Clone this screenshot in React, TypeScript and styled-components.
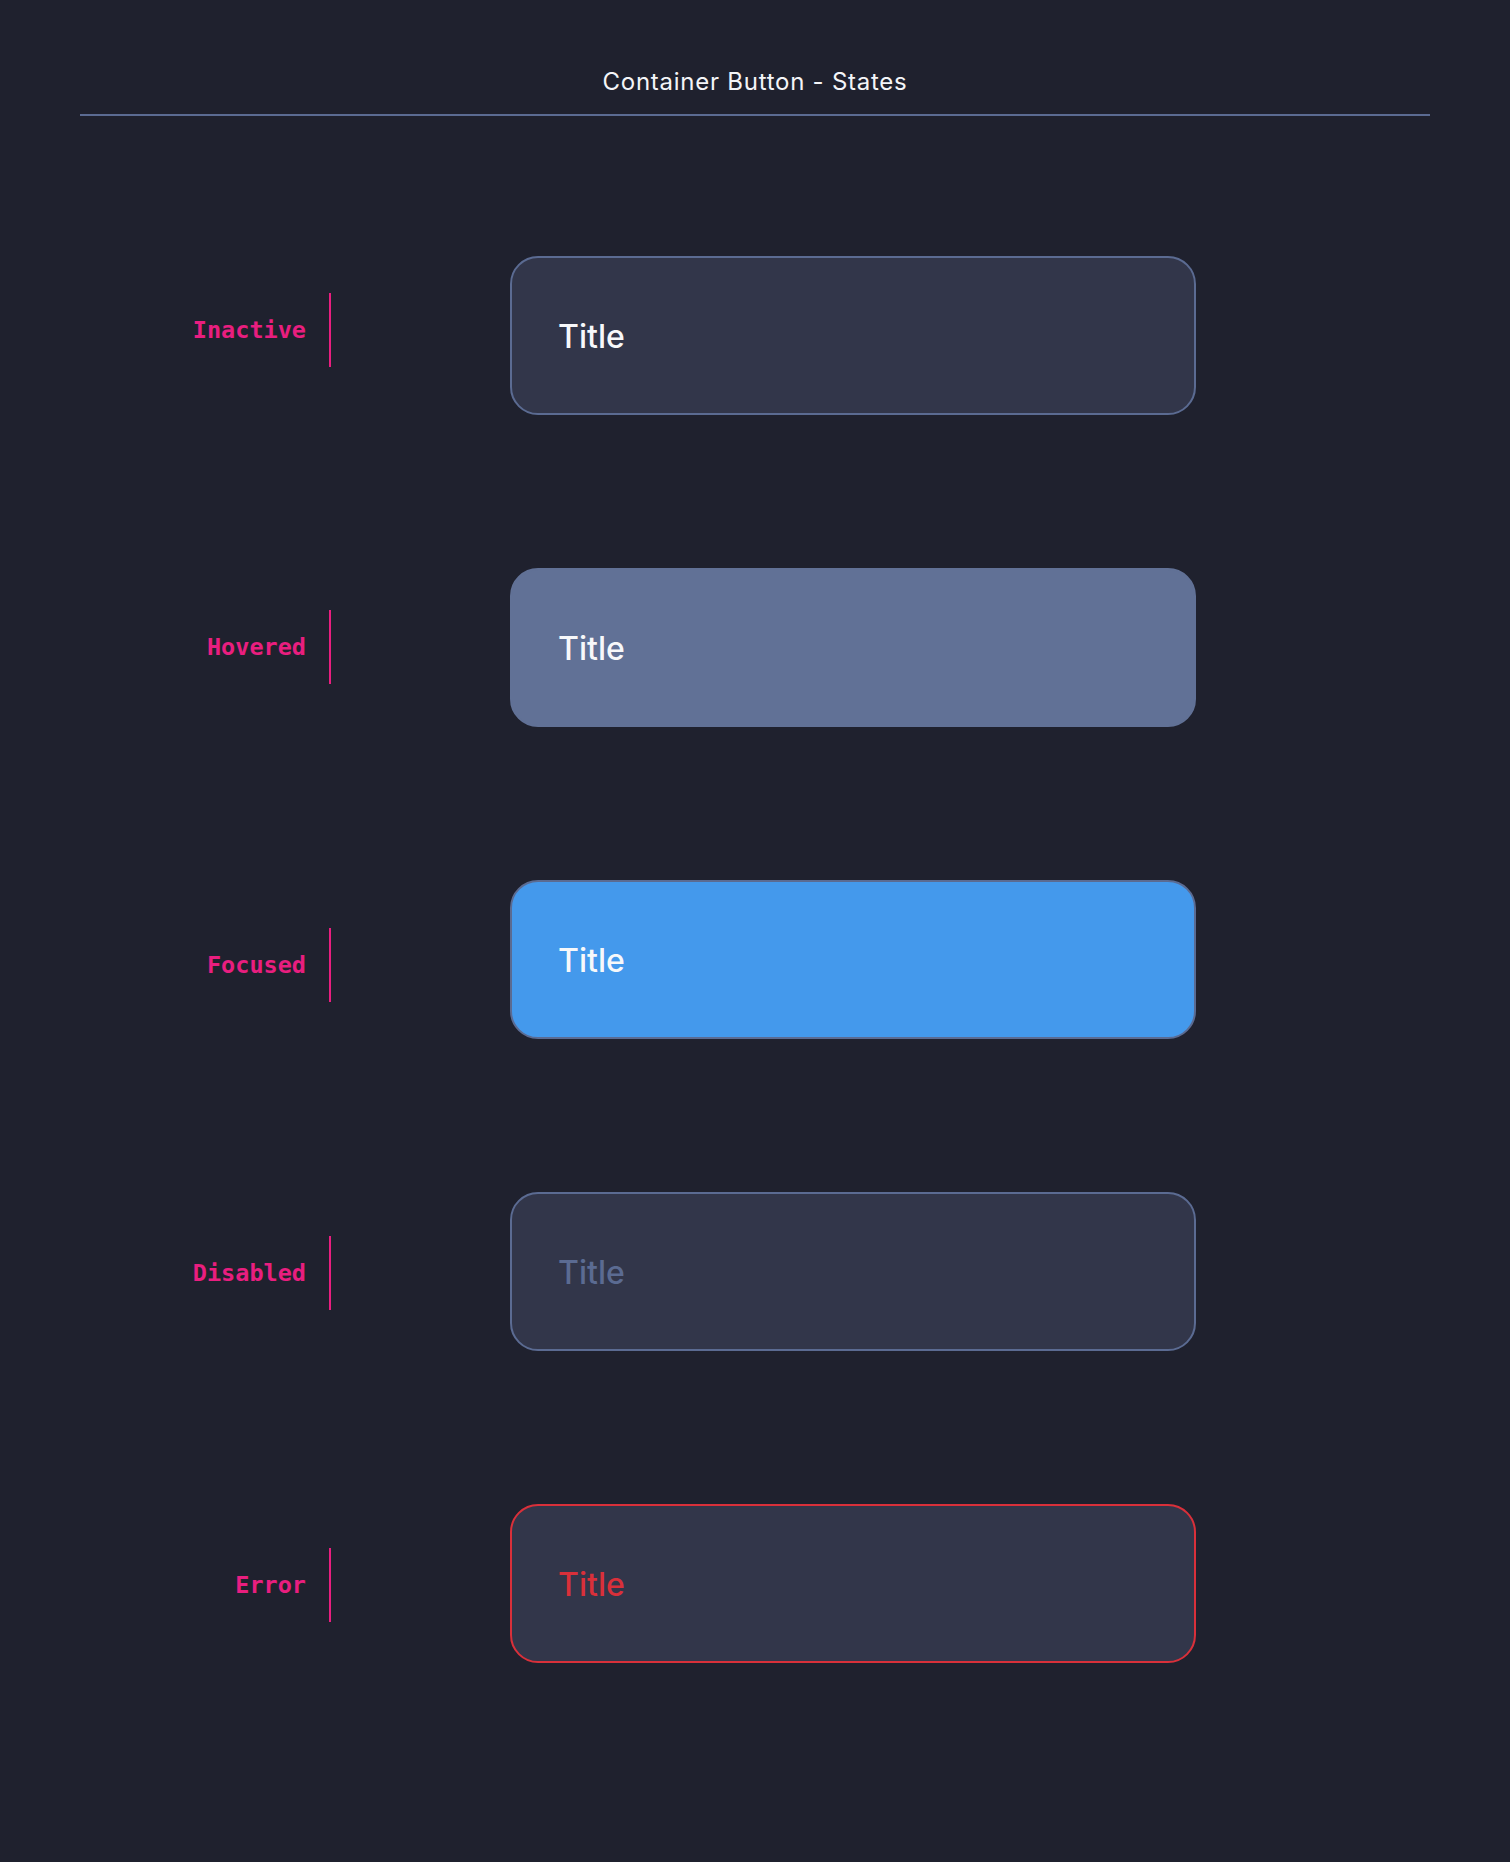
import styled, { createGlobalStyle, css } from "styled-components";

type State = "inactive" | "hovered" | "focused" | "disabled" | "error";

const rows: { state: State; label: string; shift: number }[] = [
	{ state: "inactive", label: "Inactive", shift: -6 },
	{ state: "hovered", label: "Hovered", shift: -1 },
	{ state: "focused", label: "Focused", shift: 5 },
	{ state: "disabled", label: "Disabled", shift: 1 },
	{ state: "error", label: "Error", shift: 1 },
];

const App = () => {
	return (
		<>
			<GlobalStyle />
			<Page>
				<Header>
					<Heading>Container Button - States</Heading>
				</Header>
				<List>
					{rows.map((row) => (
						<Row key={row.state}>
							<LabelGroup $shift={row.shift}>
								<Label>{row.label}</Label>
								<Marker />
							</LabelGroup>
							<ContainerButton $state={row.state}>
								<ButtonTitle $state={row.state}>Title</ButtonTitle>
							</ContainerButton>
						</Row>
					))}
				</List>
			</Page>
		</>
	);
};

const GlobalStyle = createGlobalStyle`
	html, body {
		margin: 0;
		padding: 0;
		background-color: #1f212e;
	}
	* {
		box-sizing: border-box;
	}
`;

const Page = styled.div`
	min-height: 1862px;
	padding: 0 80px;
	background-color: #1f212e;
`;

const Header = styled.header`
	padding-top: 66px;
	padding-bottom: 16px;
	border-bottom: 2px solid #5b6b92;
	display: flex;
	justify-content: center;
`;

const Heading = styled.h1`
	margin: 0;
	font-family: "Inter", "Open Sans", sans-serif;
	font-weight: 400;
	font-size: 24px;
	letter-spacing: 0.75px;
	line-height: 32px;
	color: #f4f5f8;
`;

const List = styled.div`
	display: flex;
	flex-direction: column;
	gap: 153px;
	padding-top: 140px;
`;

const Row = styled.div`
	display: flex;
	align-items: center;
`;

const LabelGroup = styled.div<{ $shift: number }>`
	display: flex;
	align-items: center;
	width: 251px;
	gap: 23px;
	transform: translateY(${(p) => p.$shift}px);
	margin-right: 179px;
`;

const Label = styled.span`
	flex: 1;
	text-align: right;
	font-family: "DejaVu Sans Mono", "Liberation Mono", monospace;
	font-weight: 700;
	font-size: 23.5px;
	line-height: 28px;
	color: #e91e7f;
`;

const Marker = styled.div`
	width: 2px;
	height: 74px;
	background-color: #e91e7f;
`;

const buttonStates = {
	inactive: css`
		background-color: #32364a;
		border: 2px solid #5b6b92;
	`,
	hovered: css`
		background-color: #617196;
		border: 2px solid #617196;
	`,
	focused: css`
		background-color: #4499ec;
		border: 2px solid #5b6b92;
	`,
	disabled: css`
		background-color: #32364a;
		border: 2px solid #5b6b92;
	`,
	error: css`
		background-color: #32364a;
		border: 2px solid #d9303a;
	`,
};

const ContainerButton = styled.div<{ $state: State }>`
	display: flex;
	align-items: center;
	width: 686px;
	height: 159px;
	padding-left: 46px;
	padding-top: 2px;
	border-radius: 28px;
	${(p) => buttonStates[p.$state]}
`;

const ButtonTitle = styled.span<{ $state: State }>`
	font-family: "Inter", "Open Sans", sans-serif;
	font-weight: 500;
	font-size: 32px;
	line-height: 40px;
	color: ${(p) =>
		p.$state === "disabled"
			? "#5b6b92"
			: p.$state === "error"
			? "#d9303a"
			: "#f7f8fa"};
`;

export default App;
